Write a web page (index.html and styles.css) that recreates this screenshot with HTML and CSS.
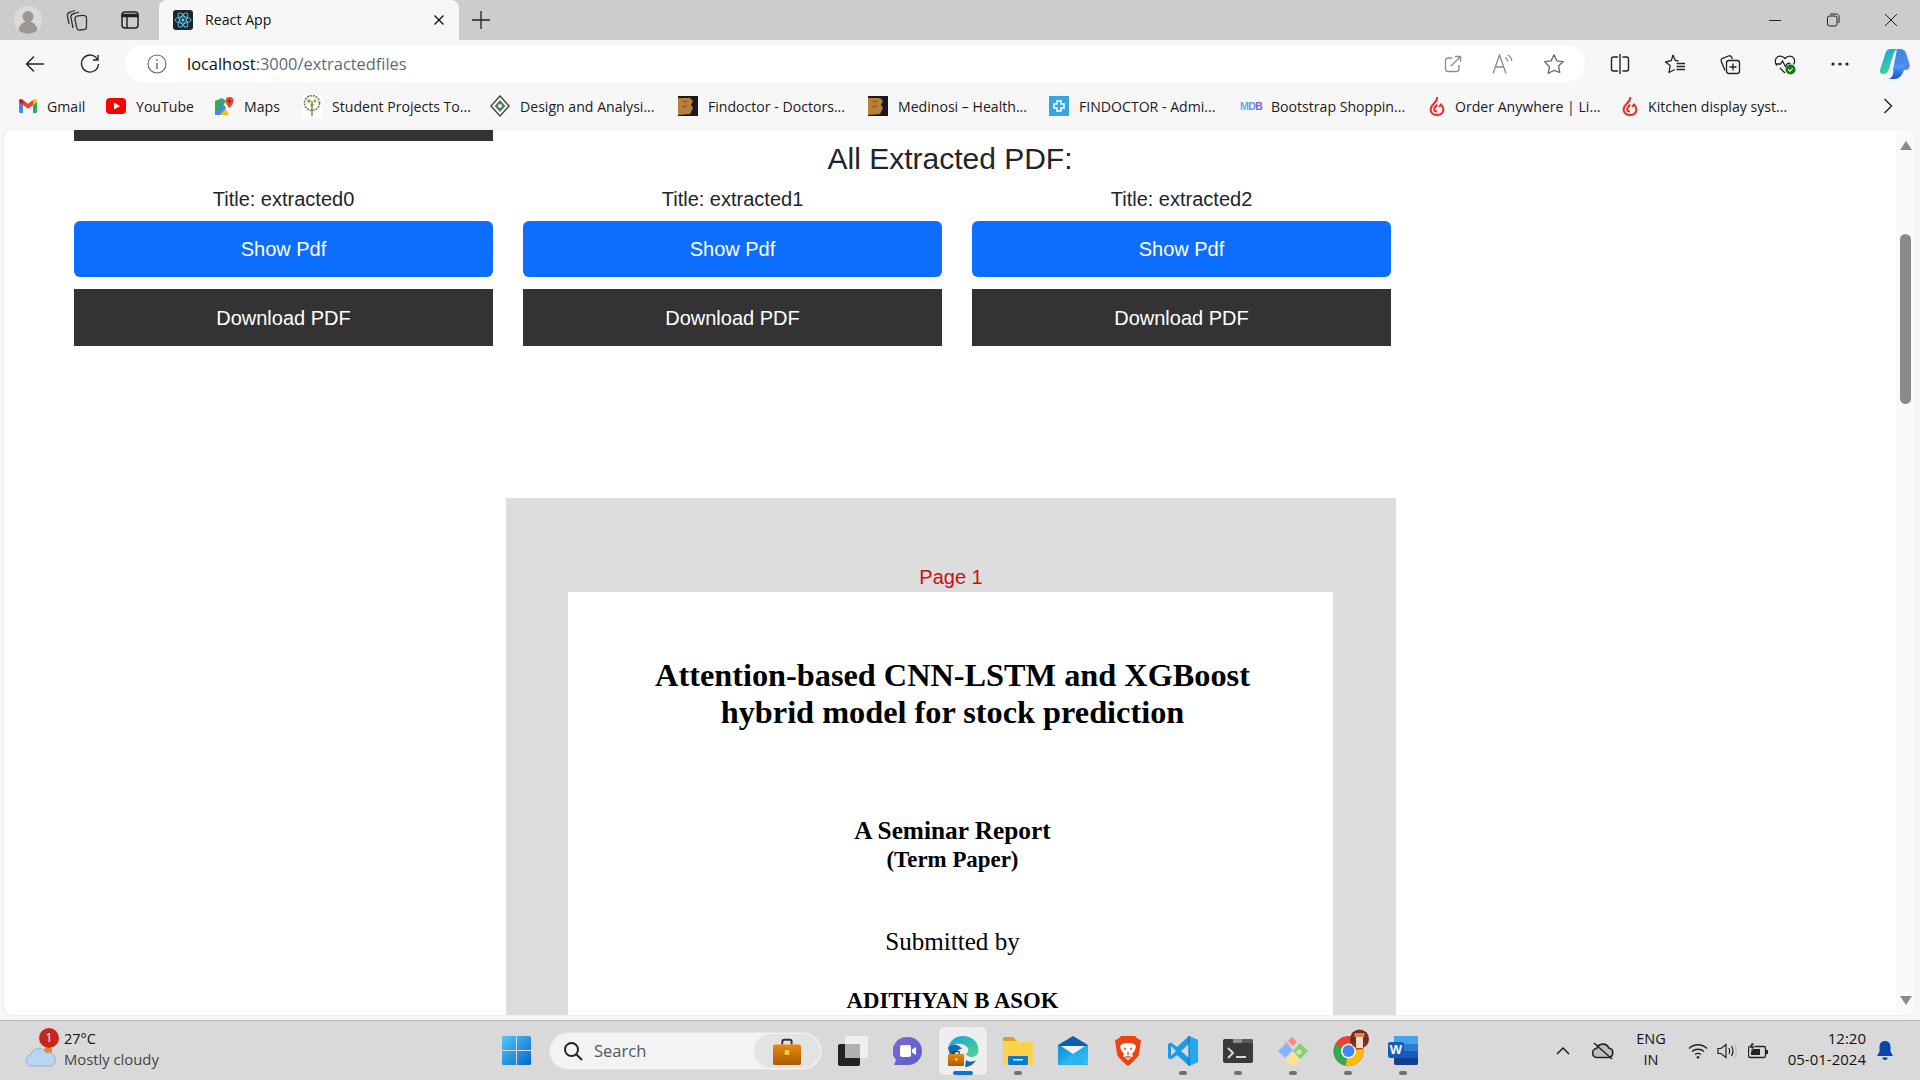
FILE: index.html
```html
<!DOCTYPE html>
<html lang="en">
<head>
<meta charset="utf-8">
<title>React App</title>
<link rel="stylesheet" href="styles.css">
</head>
<body>
<svg class="defs" width="0" height="0" aria-hidden="true">
  <defs>
    <linearGradient id="gCop1" x1="0" y1="0" x2="0.4" y2="1"><stop offset="0" stop-color="#1a9fe6"/><stop offset="1" stop-color="#3fd98f"/></linearGradient>
    <linearGradient id="gCop2" x1="0" y1="0" x2="1" y2="1"><stop offset="0" stop-color="#2c8fe8"/><stop offset="1" stop-color="#6a7ff0"/></linearGradient>
    <linearGradient id="gCop3" x1="0" y1="0" x2="0" y2="1"><stop offset="0" stop-color="#4aa6f5"/><stop offset="1" stop-color="#1b4fd8"/></linearGradient>
    <linearGradient id="gEdge" x1="0" y1="0" x2="1" y2="1"><stop offset="0" stop-color="#1aa0e0"/><stop offset="1" stop-color="#4fd68a"/></linearGradient>
    <linearGradient id="gBrief" x1="0" y1="0" x2="0" y2="1"><stop offset="0" stop-color="#e88a0c"/><stop offset="1" stop-color="#a85c08"/></linearGradient>
    <linearGradient id="gMeet" x1="0" y1="0" x2="1" y2="1"><stop offset="0" stop-color="#7a69d8"/><stop offset="1" stop-color="#5a5ec8"/></linearGradient>
    <linearGradient id="gWin" x1="0" y1="0" x2="1" y2="1"><stop offset="0" stop-color="#4fc9f8"/><stop offset="1" stop-color="#0568c8"/></linearGradient>
    <linearGradient id="gMail" x1="0" y1="0" x2="1" y2="1"><stop offset="0" stop-color="#0f8fdc"/><stop offset="1" stop-color="#35c6f4"/></linearGradient>
  </defs>
</svg>

<div class="tabstrip">
  <div class="strip-left">
    <span class="cell-strip cell-avatar">
      <svg width="28" height="28" viewBox="0 0 28 28"><circle cx="14" cy="14" r="14" fill="#dcdad6"/><circle cx="14" cy="10.5" r="5.5" fill="#9b9893"/><path d="M4.5 24c1-6 5-8.500 9.500-8.500s8.500 2.500 9.500 8.500a14 14 0 0 1-19 0z" fill="#9b9893"/></svg>
    </span>
    <span class="cell-strip cell-coll">
      <svg width="22" height="22" viewBox="0 0 22 22" fill="none" stroke="#333" stroke-width="1.300"><path d="M3 15L1.500 7.500C1 5 2.500 3.500 4.500 3L9 1.500"/><path d="M7 19L5 9C4.500 6.500 6 5 8 4.500L13 3"/><path d="M9 10.500C8.700 8.500 10 7 12 6.800l5-.5c2-.2 3.500 1 3.500 3v8.200c0 2-1.200 3.200-3 3.200L14 21c-1.800.2-3-.8-3.300-2.500z"/></svg>
    </span>
    <span class="cell-strip cell-vtabs">
      <svg width="18" height="18" viewBox="0 0 18 18" fill="none" stroke="#222" stroke-width="1.500"><rect x="1" y="1" width="16" height="16" rx="3"/><path d="M1.500 3.500h15v2h-15z" fill="#222"/><path d="M6 5v12"/></svg>
    </span>
  </div>
  <div class="tab">
    <svg class="favicon" width="20" height="20" viewBox="0 0 20 20"><rect width="20" height="20" rx="3" fill="#20262e"/><g fill="none" stroke="#5fd0ee" stroke-width=".9"><ellipse cx="10" cy="10" rx="8" ry="3.200"/><ellipse cx="10" cy="10" rx="8" ry="3.200" transform="rotate(60 10 10)"/><ellipse cx="10" cy="10" rx="8" ry="3.200" transform="rotate(120 10 10)"/></g><circle cx="10" cy="10" r="1.600" fill="#5fd0ee"/></svg>
    <span class="tab-title">React App</span>
    <svg class="tab-x" width="12" height="12" viewBox="0 0 12 12" fill="none" stroke="#111" stroke-width="1.400"><path d="M1.500 1.500l9 9M10.500 1.500l-9 9"/></svg>
  </div>
  <svg class="new-tab" width="18" height="18" viewBox="0 0 18 18" fill="none" stroke="#222" stroke-width="1.300"><path d="M9 0v18M0 9h18"/></svg>
  <div class="win-controls">
    <svg width="14" height="14" viewBox="0 0 14 14" fill="none" stroke="#222" stroke-width="1"><path d="M1 7.500h12"/></svg>
    <svg width="14" height="14" viewBox="0 0 14 14" fill="none" stroke="#222" stroke-width="1"><rect x="1.500" y="3" width="9.500" height="10" rx="2"/><path d="M4 1h6.500c1.500 0 2.500 1 2.500 2.500V10"/></svg>
    <svg width="14" height="14" viewBox="0 0 14 14" fill="none" stroke="#222" stroke-width="1"><path d="M1 1l12 12M13 1L1 13"/></svg>
  </div>
</div>

<div class="toolbar">
  <span class="cell-nav">
    <svg width="20" height="18" viewBox="0 0 20 18" fill="none" stroke="#222" stroke-width="1.400"><path d="M19 9H1.500M9 1.500L1.500 9 9 16.500"/></svg>
  </span>
  <span class="cell-nav">
    <svg width="20" height="20" viewBox="0 0 20 20" fill="none" stroke="#222" stroke-width="1.400"><path d="M17.500 5.500A8.500 8.500 0 1 0 18.500 10"/><path d="M18 1v5h-5"/></svg>
  </span>
  <div class="address">
    <svg width="20" height="20" viewBox="0 0 20 20" fill="none" stroke="#666" stroke-width="1.100"><circle cx="10" cy="10" r="9"/><path d="M10 9v6" stroke-width="1.400"/><circle cx="10" cy="6" r=".9" fill="#666" stroke="none"/></svg>
    <span class="url"><span class="url-host">localhost</span>:3000/extractedfiles</span>
    <div class="addr-actions">
      <span class="cell-addr"><svg width="18" height="18" viewBox="0 0 18 18" fill="none" stroke="#8a8a8a" stroke-width="1.300"><path d="M8 3H4a2.500 2.500 0 0 0-2.500 2.500v8.500A2.500 2.500 0 0 0 4 16.500h8.500A2.500 2.500 0 0 0 15 14v-4"/><path d="M7 11L16 2M11 1.500h5.500V7"/></svg></span>
      <span class="cell-addr"><svg width="22" height="20" viewBox="0 0 22 20" fill="none" stroke="#8a8a8a" stroke-width="1.300"><path d="M1 19.500L7.500 1l6.500 18.500M3.500 13h8"/><path d="M13 3.500c1.800.8 2.500 2 2.800 3.800M15.500 1c2.800 1 4 3 4.300 6"/></svg></span>
      <span class="cell-addr"><svg width="22" height="22" viewBox="0 0 22 22" fill="none" stroke="#666" stroke-width="1.300" stroke-linejoin="round"><path d="M11 1.800l2.800 6 6.500.8-4.800 4.400 1.300 6.500L11 17.300l-5.800 3.200 1.300-6.500L1.700 8.600l6.500-.8z"/></svg></span>
    </div>
  </div>
  <div class="tool-actions">
    <span class="cell-nav"><svg width="20" height="20" viewBox="0 0 20 20" fill="none" stroke="#222" stroke-width="1.400"><path d="M8 3H3.500A2 2 0 0 0 1.500 5v10a2 2 0 0 0 2 2H8M12.500 3h4a2 2 0 0 1 2 2v10a2 2 0 0 1-2 2h-4M10 0v20"/></svg></span>
    <span class="cell-nav"><svg width="22" height="22" viewBox="0 0 22 22" fill="none" stroke="#222" stroke-width="1.300" stroke-linejoin="round"><path d="M9 2l2.300 5.500 3.200.3M6.200 12.500L1.500 9l5.800-1.300L9 2M6.200 12.500L5 19.500l5.800-3"/><path d="M12.500 10.500H21M12.500 13.500H21M12.500 16.500H21"/></svg></span>
    <span class="cell-nav"><svg width="22" height="22" viewBox="0 0 22 22" fill="none" stroke="#222" stroke-width="1.300"><path d="M6 17.500L2.300 8.500c-.6-1.300 0-2.700 1.300-3.200L9.500 3c1.300-.5 2.500 0 3.200 1.300L13.500 6"/><rect x="7.500" y="7.500" width="13" height="13" rx="2.500"/><path d="M14 10.500v7M10.500 14h7"/></svg></span>
    <span class="cell-nav"><svg width="22" height="22" viewBox="0 0 22 22"><path d="M3 12.500C1.200 10.500.8 8 2 5.500 3.700 2.500 8 2 11 5.500c3-3.500 7.300-3 9 0 1 2 .7 4-.5 6M1.500 11h5l2-3 3 5.500 2-3h3M6 15l5 5" fill="none" stroke="#222" stroke-width="1.300"/><circle cx="16.500" cy="16.500" r="5" fill="#107c10"/><path d="M14.300 16.500l1.600 1.600 2.800-2.800" fill="none" stroke="#fff" stroke-width="1.200"/></svg></span>
    <span class="cell-nav"><svg width="18" height="4" viewBox="0 0 18 4" fill="#222"><circle cx="2" cy="2" r="1.600"/><circle cx="9" cy="2" r="1.600"/><circle cx="16" cy="2" r="1.600"/></svg></span>
    <span class="cell-nav"><svg width="30" height="32" viewBox="0 0 30 32"><path d="M17 1h3c3 0 5 1.500 6 4l3.500 11c.8 3-1 6-4 6H13z" fill="url(#gCop2)"/><path d="M10 1h9c-3 0-4.500 2-5.500 5L9 21c-1 3-2.500 5-6 5-2.500 0-3.500-2-2.800-4.500L5.500 5c.7-2.500 2.500-4 4.500-4z" fill="url(#gCop1)"/><path d="M14 17h11c-1 8-4.500 14-11 14H7c3.500 0 5-2 6-5z" fill="url(#gCop3)"/></svg></span>
  </div>
</div>

<div class="bookmarks">
  <span class="bm"><svg width="18" height="14" viewBox="0 0 18 14"><path d="M0 2v10.500c0 .8.600 1.500 1.400 1.500H4V6z" fill="#4285f4"/><path d="M14 6v8h2.600c.8 0 1.400-.7 1.400-1.500V2z" fill="#34a853"/><path d="M4 6l5 3.800L14 6V1l-5 3.800L4 1z" fill="#ea4335"/><path d="M0 2c0-1.800 2-2.600 3.300-1.500L4 1v5L0 3z" fill="#c5221f"/><path d="M14 1l.7-.5C16 -.6 18 .2 18 2v1l-4 3z" fill="#fbbc04"/></svg><span class="bm-text">Gmail</span></span>
  <span class="bm"><svg width="20" height="16" viewBox="0 0 20 16"><rect width="20" height="16" rx="4" fill="#f00"/><path d="M8 4.500v7l6-3.500z" fill="#fff"/></svg><span class="bm-text">YouTube</span></span>
  <span class="bm"><svg width="19" height="19" viewBox="0 0 19 19"><path d="M0 4l7-3 4 3-3 5-8 8z" fill="#34a853"/><path d="M0 18L9 9l5 9z" fill="#fbbc04"/><path d="M0 18V15l9-7 2 3-6 7z" fill="#4285f4"/><path d="M4 3h3v3H4z" fill="#4285f4"/><path d="M14.500 0a4 4 0 0 1 4 4c0 3-4 7-4 7s-4-4-4-7a4 4 0 0 1 4-4z" fill="#ea4335"/><circle cx="14.500" cy="4" r="1.500" fill="#a5201a"/></svg><span class="bm-text">Maps</span></span>
  <span class="bm"><svg width="20" height="22" viewBox="0 0 20 22"><rect width="20" height="22" fill="#fff"/><circle cx="10" cy="8" r="7.500" fill="none" stroke="#6f8268" stroke-width="1.800" stroke-dasharray="2 1"/><circle cx="7" cy="6" r="1.700" fill="#7ba04a"/><circle cx="13" cy="6" r="1.700" fill="#d8a23a"/><circle cx="10" cy="10" r="1.700" fill="#7ba04a"/><path d="M10 6v15" stroke="#a8884a" stroke-width="1.600"/></svg><span class="bm-text">Student Projects To...</span></span>
  <span class="bm"><svg width="20" height="22" viewBox="0 0 20 22"><path d="M10 1l9 10-9 10L1 11z" fill="#fff" stroke="#444" stroke-width="1.400"/><path d="M10 5l5.500 6-5.500 6-5.500-6z" fill="#557a5a"/><circle cx="10" cy="11" r="2" fill="#e6ece6"/></svg><span class="bm-text">Design and Analysi...</span></span>
  <span class="bm"><svg width="20" height="20" viewBox="0 0 20 20"><rect width="20" height="20" fill="#1d1b1a"/><path d="M0 2h12l3 3-2 4 2 3-3 6-12 1z" fill="#b87f3a"/><path d="M5 5l4 1M4 11l5-1" stroke="#7a5222"/></svg><span class="bm-text">Findoctor - Doctors...</span></span>
  <span class="bm"><svg width="20" height="20" viewBox="0 0 20 20"><rect width="20" height="20" fill="#1d1b1a"/><path d="M0 2h12l3 3-2 4 2 3-3 6-12 1z" fill="#b87f3a"/><path d="M5 5l4 1M4 11l5-1" stroke="#7a5222"/></svg><span class="bm-text">Medinosi – Health...</span></span>
  <span class="bm"><svg width="20" height="20" viewBox="0 0 20 20"><rect width="20" height="20" fill="#38a6e2"/><path d="M8 5h4v3h3v4h-3v3H8v-3H5V8h3z" fill="none" stroke="#fff" stroke-width="1.500"/></svg><span class="bm-text">FINDOCTOR - Admi...</span></span>
  <span class="bm"><span class="mdb">M<span class="mdb-d">D</span><span class="mdb-b">B</span></span><span class="bm-text">Bootstrap Shoppin...</span></span>
  <span class="bm"><svg width="16" height="20" viewBox="0 0 15 20" fill="none" stroke="#ec2b2b" stroke-width="2"><path d="M7.500 1C8.500 4 6 6 3.500 8.500 1 11 .6 14 2 16.500 3.200 18.400 5.500 19 7.500 19s4.300-.6 5.500-2.500c1.400-2.500 1-5.500-1.500-8L9.500 11"/><path d="M7.500 15.500c-1.800 0-2.800-1-2.800-2.300 0-1.800 1.800-2.700 2.800-4.700"/></svg><span class="bm-text">Order Anywhere | Li...</span></span>
  <span class="bm"><svg width="16" height="20" viewBox="0 0 15 20" fill="none" stroke="#ec2b2b" stroke-width="2"><path d="M7.500 1C8.500 4 6 6 3.500 8.500 1 11 .6 14 2 16.500 3.200 18.400 5.500 19 7.500 19s4.300-.6 5.500-2.500c1.400-2.500 1-5.500-1.500-8L9.500 11"/><path d="M7.500 15.500c-1.800 0-2.800-1-2.800-2.300 0-1.800 1.800-2.700 2.800-4.700"/></svg><span class="bm-text">Kitchen display syst...</span></span>
  <svg class="bm-more" width="10" height="16" viewBox="0 0 10 16" fill="none" stroke="#222" stroke-width="1.400"><path d="M1.500 1l7 7-7 7"/></svg>
</div>

<div class="viewport">
  <main class="page">
    <div class="cols cols-top"><div class="stub"></div></div>
    <h2 class="heading">All Extracted PDF:</h2>
    <div class="cols">
      <section class="file">
        <p class="file-title">Title: extracted0</p>
        <button class="btn btn-show">Show Pdf</button>
        <button class="btn btn-dl">Download PDF</button>
      </section>
      <section class="file">
        <p class="file-title">Title: extracted1</p>
        <button class="btn btn-show">Show Pdf</button>
        <button class="btn btn-dl">Download PDF</button>
      </section>
      <section class="file">
        <p class="file-title">Title: extracted2</p>
        <button class="btn btn-show">Show Pdf</button>
        <button class="btn btn-dl">Download PDF</button>
      </section>
    </div>
    <div class="viewer">
      <p class="page-no">Page 1</p>
      <article class="sheet">
        <h1 class="doc-title">Attention-based CNN-LSTM and XGBoost<br>hybrid model for stock prediction</h1>
        <p class="doc-sub">A Seminar Report</p>
        <p class="doc-term">(Term Paper)</p>
        <p class="doc-by">Submitted by</p>
        <p class="doc-author">ADITHYAN B ASOK</p>
      </article>
    </div>
  </main>
  <div class="scrollbar">
    <svg width="12" height="9" viewBox="0 0 12 9"><path d="M6 0l6 9H0z" fill="#8a8a8a"/></svg>
    <span class="thumb"></span>
    <svg class="arrow-down" width="12" height="9" viewBox="0 0 12 9"><path d="M6 9l6-9H0z" fill="#8a8a8a"/></svg>
  </div>
</div>

<footer class="taskbar">
  <div class="weather">
    <span class="weather-icon">
      <svg width="32" height="24" viewBox="0 0 32 24"><circle cx="23" cy="7" r="4" fill="#e8861c"/><path d="M7 22a5.500 5.500 0 0 1-1-11 8 8 0 0 1 15-2 6.500 6.500 0 0 1 5 13z" fill="#b9d5f2" stroke="#8fb6e2"/></svg>
      <span class="badge">1</span>
    </span>
    <span class="weather-text"><span class="temp">27°C</span><span class="cond">Mostly cloudy</span></span>
  </div>
  <svg class="win" width="29" height="29" viewBox="0 0 29 29"><path d="M0 1.500A1.500 1.500 0 0 1 1.500 0H14v14H0zM15 0h12.500A1.500 1.500 0 0 1 29 1.500V14H15zM0 15h14v14H1.500A1.500 1.500 0 0 1 0 27.500zM15 15h14v12.500a1.500 1.500 0 0 1-1.500 1.500H15z" fill="url(#gWin)"/></svg>
  <div class="search">
    <svg width="20" height="20" viewBox="0 0 20 20" fill="none" stroke="#222" stroke-width="2"><circle cx="8.500" cy="8.500" r="6.500"/><path d="M13.500 13.500L19 19"/></svg>
    <span class="search-text">Search</span>
    <span class="search-badge"><svg width="28" height="28" viewBox="0 0 30 30"><path d="M10 8V5a2 2 0 0 1 2-2h6a2 2 0 0 1 2 2v3" fill="none" stroke="#333" stroke-width="2"/><rect y="8" width="30" height="22" rx="2" fill="url(#gBrief)"/><rect x="12.500" y="14" width="5" height="5" fill="#f8d040"/></svg></span>
  </div>
  <div class="apps">
    <span class="app"><svg width="30" height="30" viewBox="0 0 30 30"><rect x="0" y="8" width="22" height="22" rx="2" fill="#222"/><rect x="7" y="0" width="23" height="22" rx="2" fill="#f2f2f2" opacity=".85"/><rect x="7" y="8" width="15" height="14" fill="#b0b0b0"/></svg></span>
    <span class="app"><svg width="30" height="30" viewBox="0 0 30 30"><path d="M15 1a14 14 0 0 1 0 28H1l2-5A14 14 0 0 1 15 1z" fill="url(#gMeet)"/><rect x="7" y="9" width="11" height="12" rx="2" fill="#fff"/><path d="M19 13.500l4-2.500v8l-4-2.500z" fill="#fff"/></svg></span>
    <span class="app app-active"><svg width="32" height="32" viewBox="0 0 32 32"><path d="M1 13C3 5 9 1 15.500 1 25 1 31.500 7 31.500 15c0 4.500-3 7-7 7-2.500 0-4.500-1-5.500-3 2.500-1.500 3-4 1.500-6.500-3-4-9-5-13.500-2.500C3.500 12 3 13 1 13z" fill="url(#gEdge)"/><path d="M1 13c4-5 11-4 14 1-3 0-6 2-7 6H3z" fill="#1369b8"/><path d="M18 32c5 0 9-3 11-7-3 2-7 2-10 0z" fill="#1369b8"/><rect x="1" y="19" width="16" height="12" rx="1" fill="url(#gBrief)"/><path d="M6 19v-2.500h6V19" fill="none" stroke="#333" stroke-width="1.200"/><rect x="8" y="23" width="2.500" height="2.500" fill="#f8d040"/></svg><span class="run run-on"></span></span>
    <span class="app"><svg width="30" height="28" viewBox="0 0 30 28"><path d="M0 2a2 2 0 0 1 2-2h8l4 4H0z" fill="#d9a020"/><path d="M0 5h28a2 2 0 0 1 2 2v21H0z" fill="#fbd24e"/><rect x="5" y="19" width="20" height="9" rx="1" fill="#0a7cd0"/><rect x="10" y="22" width="10" height="1.500" fill="#d5effb"/></svg><span class="run"></span></span>
    <span class="app"><svg width="30" height="29" viewBox="0 0 30 29"><path d="M0 9h30v20H0z" fill="url(#gMail)"/><path d="M0 9L15 0l15 9-2 1H2z" fill="#0d5fae"/><path d="M3 10h24L15 18z" fill="#eef3f8"/><path d="M0 29l15-11 15 11z" fill="#2db4f0"/></svg></span>
    <span class="app"><svg width="26" height="30" viewBox="0 0 26 30"><path d="M6 0h14l3 3 3 1-2 14c-.5 3-7 9-11 12-4-3-10.500-9-11-12L0 4l3-1z" fill="#f0420f"/><path d="M7 8l4-1h4l4 1 2 2-1 4-3 4 1 2-5 4-5-4 1-2-3-4-1-4z" fill="#fff"/><path d="M9 12l2 1.500M17 12l-2 1.500M13 16v3M10.500 21h5" stroke="#f0420f" stroke-width="1.300"/></svg></span>
    <span class="app"><svg width="30" height="30" viewBox="0 0 30 30"><path d="M21 0l9 4v22l-9 4-12-11-6 4.500L0 22V8l3-1.500L9 11z" fill="#1c9ce8"/><path d="M21 0l9 4v22l-9 4z" fill="#23a9f2"/><path d="M21 8l-8 7 8 7z" fill="#d9d9d9"/><path d="M3 10l5 5-5 5" fill="#d9d9d9"/><path d="M21 0v30" stroke="#0a6fb8"/></svg><span class="run"></span></span>
    <span class="app"><svg width="30" height="24" viewBox="0 0 30 24"><rect width="30" height="24" rx="2" fill="#3a3a3a"/><path d="M10 0h9v4h-9z" fill="#8e8e8e"/><path d="M19 0h9a2 2 0 0 1 2 2v2H19z" fill="#5a5a5a"/><path d="M5 9l5 5-5 5" fill="none" stroke="#d8d8d8" stroke-width="2"/><rect x="13" y="17" width="10" height="2" fill="#d8d8d8"/></svg><span class="run"></span></span>
    <span class="app"><svg width="30" height="30" viewBox="0 0 30 30"><path d="M10 5l4-4 5 5-4 4z" fill="#f58b85"/><path d="M11 9L7 5" stroke="#f58b85"/><path d="M0 15l8-8 7 7-8 8z" fill="#86b4fa"/><path d="M22 7l8 8-8 8-7-8z" fill="#86d268"/><circle cx="21" cy="16" r="2.500" fill="#d9d9d9"/><path d="M15 16l8 8-8 6-8-6z" fill="#fde293"/></svg><span class="run"></span></span>
    <span class="app"><svg class="chrome" width="40" height="40" viewBox="0 0 40 40"><circle cx="20.500" cy="20" r="15" fill="#ea4335"/><path d="M20.500 20L7.500 13A15 15 0 0 0 17.500 35z" fill="#34a853"/><path d="M20.500 20l14.500-2A15 15 0 0 1 17.500 35z" fill="#fbbc04"/><circle cx="20.500" cy="20" r="7.500" fill="#fff"/><circle cx="20.500" cy="20" r="6" fill="#4285f4"/><circle cx="31.500" cy="8" r="9.500" fill="#7a2a20"/><path d="M28 6h7v11h-7z" fill="#f0ddd0"/><path d="M26.500 2h10v4h-10z" fill="#c9904e"/><path d="M25.500 11l3 3-3 1zM37.500 11l-3 3 3 1z" fill="#c02a20"/></svg><span class="run"></span></span>
    <span class="app"><svg width="30" height="29" viewBox="0 0 30 29"><rect x="6" y="0" width="24" height="29" rx="2" fill="#2b7cd3"/><rect x="6" y="0" width="24" height="8" fill="#41a5ee"/><rect x="6" y="15" width="24" height="7" fill="#185abd"/><path d="M6 22h24v5a2 2 0 0 1-2 2H8a2 2 0 0 1-2-2z" fill="#103f91"/><rect y="6" width="16" height="16" rx="2" fill="#185abd"/><text x="8" y="18" class="word-w">W</text></svg><span class="run"></span></span>
  </div>
  <div class="tray">
    <span class="tray-chev"><svg width="14" height="8" viewBox="0 0 14 8" fill="none" stroke="#111" stroke-width="1.400"><path d="M1 7l6-6 6 6"/></svg></span>
    <span class="tray-cloud"><svg width="22" height="18" viewBox="0 0 22 18"><path d="M5.500 15.500a4.500 4.500 0 0 1-.8-9A6.500 6.500 0 0 1 16.800 6a4.800 4.800 0 0 1-.3 9.500z" fill="#bdbdbd" stroke="#222" stroke-width="1.600"/><path d="M2 1l18 16" stroke="#222" stroke-width="1.500"/></svg></span>
    <span class="tray-lang"><span>ENG</span><span>IN</span></span>
    <span class="tray-wifi"><svg width="20" height="16" viewBox="0 0 20 16" fill="none" stroke="#222" stroke-width="1.300"><path d="M1 5.500c5-5 13-5 18 0M4 8.500c3.500-3 8.500-3 12 0M7 11.500c2-1.500 4-1.500 6 0"/><circle cx="10" cy="14.300" r="1.300" fill="#222" stroke="none"/></svg></span>
    <span class="tray-vol"><svg width="20" height="16" viewBox="0 0 20 16" fill="none" stroke="#222" stroke-width="1.200"><path d="M1 5.500h3L9 1.500v13L4 10.500H1z"/><path d="M12 5c1 2 1 4 0 6M14.500 3c1.800 3 1.800 7 0 10"/><path d="M17.500 1c2.500 4 2.500 10 0 14" stroke="#bbb"/></svg></span>
    <span class="tray-batt"><svg width="20" height="16" viewBox="0 0 20 16"><path d="M2 3.500h14a1.500 1.500 0 0 1 1.500 1.500v8a1.500 1.500 0 0 1-1.500 1.500H2A1.500 1.500 0 0 1 .5 13V5A1.500 1.500 0 0 1 2 3.500z" fill="none" stroke="#222" stroke-width="1.300"/><rect x="3" y="6" width="9" height="6" fill="#222"/><rect x="18" y="7" width="2" height="4" fill="#222"/><path d="M3.500 0L1 5h3L2.500 9 7 3.500H4.500L6 0z" fill="#222" stroke="#d9d9d9" stroke-width=".5"/></svg></span>
    <span class="clock"><span>12:20</span><span>05-01-2024</span></span>
    <span class="tray-bell"><svg width="16" height="20" viewBox="0 0 16 20" fill="#0a45a8"><path d="M8 0c3.500 0 5.500 2.500 5.500 6v4.500L16 15H0l2.500-4.500V6C2.500 2.500 4.500 0 8 0z"/><path d="M5.500 16.500h5a2.500 2.500 0 0 1-5 0z"/></svg></span>
  </div>
</footer>
</body>
</html>
```
FILE: styles.css
```css
* { box-sizing: border-box; }
html, body { margin: 0; height: 100%; overflow: hidden; }
body {
  width: 1920px;
  height: 1080px;
  display: flex;
  flex-direction: column;
  background: #f7f7f7;
  font-family: "Open Sans", "Noto Sans", sans-serif;
  color: #111;
}
.defs { position: absolute; }

/* tab strip */
.tabstrip { height: 40px; flex: none; background: #ccc; display: flex; align-items: center; }
.strip-left { display: flex; width: 159px; flex: none; align-items: center; padding-left: 2px; }
.cell-strip { display: flex; justify-content: center; }
.cell-avatar { width: 52px; }
.cell-coll { width: 46px; }
.cell-vtabs { width: 59px; }
.tab {
  width: 300px; height: 40px; flex: none; background: #f7f7f7; border-radius: 8px 8px 0 0;
  display: flex; align-items: center; padding-left: 14px;
}
.tab-title { margin: 0 0 2px 12px; font-size: 14.200px; flex: 1; }
.tab-x { margin-right: 14px; }
.new-tab { margin-left: 13px; }
.win-controls { margin-left: auto; display: flex; gap: 44px; padding-right: 22px; }

/* toolbar */
.toolbar { height: 42px; flex: none; display: flex; align-items: flex-start; padding: 5px 0 0 7px; }
.cell-nav { width: 55px; height: 37px; display: flex; align-items: center; justify-content: center; flex: none; }
.address {
  width: 1460px; height: 37px; margin-left: 8px; flex: none; background: #fff; border-radius: 19px;
  display: flex; align-items: center; padding-left: 22px;
}
.url { margin-left: 20px; font-size: 16.400px; color: #5f6a78; }
.url-host { color: #111; }
.addr-actions { margin-left: auto; display: flex; padding-right: 6px; }
.cell-addr { width: 50.5px; display: flex; justify-content: center; align-items: center; }
.tool-actions { display: flex; margin-left: 7px; }

/* bookmarks */
.bookmarks {
  height: 48px; flex: none; display: grid; align-items: center; padding-left: 19px;
  grid-template-columns: 87px 109px 87px 188px 188px 190px 181px 191px 189px 193px 261px 20px;
}
.bm { display: flex; align-items: center; gap: 10px; font-size: 14.100px; white-space: nowrap; }
.bm-text { color: #1a1a1a; padding-top: 1px; }
.mdb { width: 21px; font: 700 10.500px "Liberation Sans", sans-serif; color: #4fb4ea; letter-spacing: -.6px; }
.mdb-d { color: #6a8fe0; }
.mdb-b { color: #7a5fd0; }

/* page */
.viewport {
  height: 885px; flex: none; margin: 0 5px 0 4px; background: #fff; border-radius: 8px; overflow: hidden;
  display: flex; box-shadow: 0 0 2px rgba(0,0,0,.12);
}
.page {
  width: 1892px; flex: none; overflow: hidden; padding-left: 70px;
  font-family: "Liberation Sans", Arial, sans-serif; color: #212529;
}
.cols { display: grid; grid-template-columns: repeat(3, 419px); column-gap: 30px; }
.stub { height: 11px; background: #333; }
.heading { margin: 0 0 0 -70px; text-align: center; font-weight: 400; font-size: 30px; line-height: 35px; color: #212529; }
.file { display: flex; flex-direction: column; }
.file-title { margin: 11px 0 10px; text-align: center; font-size: 20px; line-height: 24px; }
.btn {
  border: 0; padding: 0; width: 419px; color: #fff; font: 400 20px "Liberation Sans", Arial, sans-serif;
}
.btn-show { height: 56px; background: #0d6efd; border-radius: 6px; }
.btn-dl { height: 57px; margin-top: 12px; padding-top: 2px; background: #333; }
.viewer {
  width: 890px; height: 560px; margin: 152px 0 0 432px; background: #ddd;
  display: flex; flex-direction: column; align-items: center; overflow: hidden;
}
.page-no { margin: 67px 0 3px; font-size: 20px; line-height: 24px; color: #cc0f0f; }
.sheet {
  width: 765px; flex: 1; margin-right: 2px; background: #fff; color: #000; text-align: center; padding-left: 5px;
  font-family: "Liberation Serif", "Times New Roman", serif;
}
.doc-title { margin: 65px 0 0; font-size: 32.300px; line-height: 37px; font-weight: 700; }
.doc-sub { margin: 84px 0 0; font-size: 25.300px; line-height: 30px; font-weight: 700; }
.doc-term { margin: 1px 0 0; font-size: 22.900px; line-height: 28px; font-weight: 700; }
.doc-by { margin: 53px 0 0; font-size: 25.100px; line-height: 30px; }
.doc-author { margin: 30px 0 0; font-size: 22.800px; line-height: 28px; font-weight: 700; }
.scrollbar {
  width: 19px; flex: none; background: #fafafa;
  display: flex; flex-direction: column; align-items: center; padding-top: 11px;
}
.thumb { width: 11px; height: 170px; margin-top: 84px; border-radius: 6px; background: #8a8a8a; }
.arrow-down { margin-top: auto; margin-bottom: 10px; }

/* taskbar */
.taskbar {
  margin-top: 5px; height: 60px; flex: none; background: #d9d9d9; border-top: 1px solid #b5b5b5;
  display: flex; align-items: center; color: #111;
}
.weather { width: 502px; flex: none; display: flex; align-items: center; padding-left: 25px; }
.weather-icon { position: relative; width: 39px; height: 34px; display: flex; align-items: flex-end; }
.badge {
  position: absolute; left: 14px; top: -6px; width: 20px; height: 20px; border-radius: 50%;
  background: #c4281c; color: #fff; font-size: 12px; line-height: 20px; text-align: center;
}
.weather-text { display: flex; flex-direction: column; line-height: 21px; margin-bottom: 3px; }
.temp { font-size: 14.500px; }
.cond { font-size: 14.800px; color: #444; }
.win { flex: none; }
.search {
  width: 273px; height: 38px; margin-left: 18px; flex: none; border-radius: 19px; background: #f3f3f3;
  border: 1px solid #e4e4e4; display: flex; align-items: center; padding-left: 13px;
}
.search-text { margin: 0 0 1px 11px; font-size: 16.500px; color: #555; }
.search-badge {
  margin: 0 1px 0 auto; width: 66px; height: 34px; border-radius: 17px; background: #e3e3e3;
  display: flex; align-items: center; justify-content: center;
}
.apps { display: flex; margin-left: 3px; flex: none; }
.app { width: 55px; height: 58px; display: flex; align-items: center; justify-content: center; position: relative; }
.app-active::before {
  content: ""; position: absolute; left: 4px; right: 3px; top: 5px; bottom: 5px;
  background: #eee; border-radius: 5px; box-shadow: 0 0 1px rgba(0,0,0,.2);
}
.app-active svg { position: relative; }
.chrome { overflow: visible; }
.run {
  position: absolute; left: 50%; bottom: 5px; width: 8px; height: 4px; margin-left: -4px;
  border-radius: 2px; background: #707070;
}
.run-on { width: 20px; margin-left: -10px; background: #0a74d4; }
.word-w { font: 700 13px "Liberation Sans", sans-serif; fill: #fff; text-anchor: middle; }
.tray { margin-left: auto; display: flex; align-items: center; padding-right: 16px; font-size: 15px; }
.tray > span { display: flex; justify-content: center; }
.tray-chev { width: 30px; }
.tray-cloud { width: 50px; }
.tray .tray-lang { width: 46px; flex-direction: column; align-items: center; line-height: 21px; font-size: 14.500px; margin-bottom: 3px; }
.tray-wifi { width: 30px; margin-left: 9px; }
.tray-vol { width: 28px; }
.tray-batt { width: 34px; }
.tray .clock { width: 91px; flex-direction: column; align-items: flex-end; line-height: 21px; margin-bottom: 3px; }
.tray-bell { width: 38px; }
```
